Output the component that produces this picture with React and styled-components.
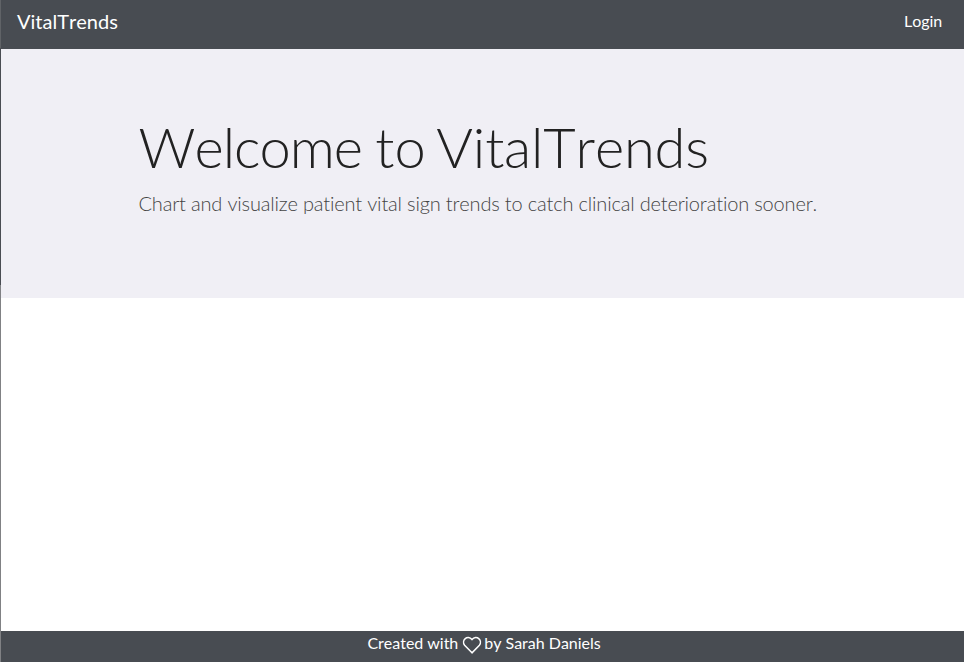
import React from 'react';
import styled, { createGlobalStyle } from 'styled-components';

const Global = createGlobalStyle`
  * { box-sizing: border-box; }
  body {
    margin: 0;
    background: #fff;
    font-family: Lato, sans-serif;
    font-kerning: none;
    font-variant-ligatures: none;
  }
`;
const Page = styled.div`
  display: flex;
  flex-direction: column;
  height: 662px;
  border-left: 1px solid;
  border-image: linear-gradient(#606367 49px, #494c52 49px, #494c52 285px, #808184 285px) 1;
`;
const Navbar = styled.header`
  display: flex;
  justify-content: space-between;
  align-items: center;
  height: 49px;
  padding: 0 22px 7px 16px;
  background: #484c52;
  color: #fff;
`;
const Brand = styled.a`
  font-size: 20px;
  line-height: 30px;
`;
const NavLink = styled.a`
  font-size: 16px;
  line-height: 24px;
  letter-spacing: -0.1px;
`;
const Jumbotron = styled.section`
  height: 249px;
  padding: 64px 137.5px;
  background: #f0eff5;
`;
const Title = styled.h1`
  margin: 0 0 8px;
  font-size: 56px;
  line-height: 67px;
  font-weight: 300;
  letter-spacing: -1px;
  word-spacing: -1px;
  color: #222;
  white-space: nowrap;
`;
const Word = styled.span`
  letter-spacing: ${(p) => p.$spacing}px;
  margin-left: ${(p) => p.$shift || 0}px;
`;
const Lead = styled.p`
  margin: 0;
  font-size: 20px;
  line-height: 30px;
  font-weight: 300;
  letter-spacing: -0.175px;
  color: #444;
  white-space: nowrap;
`;
const Content = styled.main`
  flex: 1;
`;
const Footer = styled.footer`
  display: flex;
  justify-content: center;
  align-items: center;
  gap: 3px;
  height: 31px;
  padding: 0 0 8px 3px;
  background: #484c52;
  color: #fff;
  font-size: 16px;
  letter-spacing: -0.03px;
`;
const Heart = styled.svg`
  width: 20px;
  height: 20px;
  margin: 4px -1px 0 1px;
`;

export default function App() {
  return (
    <Page>
      <Global />
      <Navbar>
        <Brand>VitalTrends</Brand>
        <NavLink>Login</NavLink>
      </Navbar>
      <Jumbotron>
        <Title>
          <Word $spacing={-1}>Welcome</Word> <Word $spacing={0}>to</Word>{' '}
          <Word $spacing={-0.2} $shift={-2.5}>VitalTrends</Word>
        </Title>
        <Lead>Chart and visualize patient vital sign trends to catch clinical deterioration sooner.</Lead>
      </Jumbotron>
      <Content />
      <Footer>
        <span>Created with</span>
        <Heart viewBox="0 0 20 20" fill="none" stroke="#fff" strokeWidth="1.5">
          <path d="M10 17.8 L2.6 10.2 C-1 5.4 5.5-.8 10 4.6 C14.5-.8 21 5.4 17.4 10.2 Z" />
        </Heart>
        <span>by Sarah Daniels</span>
      </Footer>
    </Page>
  );
}
